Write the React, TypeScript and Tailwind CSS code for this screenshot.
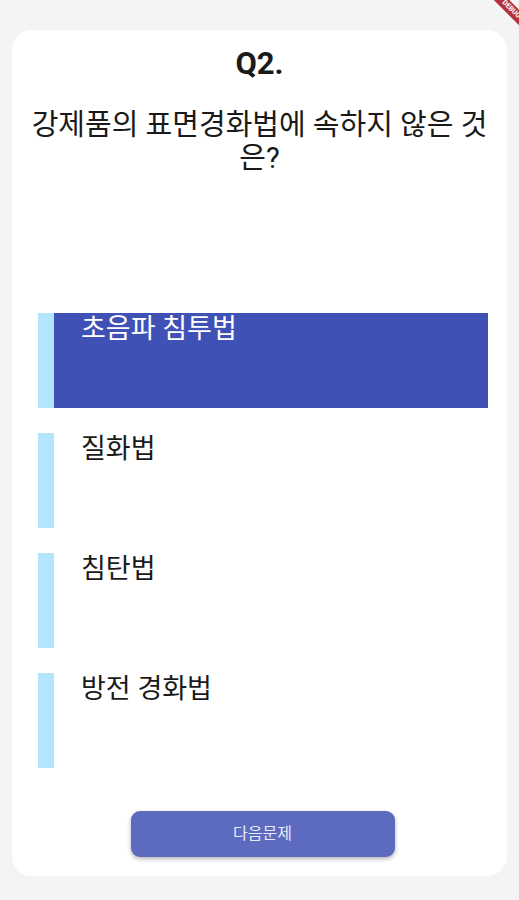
import React from 'react';

const options = ['초음파 침투법', '질화법', '침탄법', '방전 경화법'];

export default function App() {
  const selected = 0;
  return (
    <div
      className="relative h-[900px] w-[519px] overflow-hidden bg-[#f4f4f4] pt-[30px] px-[12px]"
      style={{ fontFamily: 'Roboto, "Noto Sans CJK KR", sans-serif' }}
    >
      {/* debug banner */}
      <div className="absolute right-[-20px] top-[4px] w-[56px] rotate-45 bg-[#b4333d] text-center text-[7px] font-bold leading-[11px] text-white">
        DEBUG
      </div>

      <div className="flex h-[846px] flex-col items-center rounded-[20px] bg-white">
        <div className="mt-[12px] text-[31px] font-bold leading-[44px] text-[#1a1a1a]">Q2.</div>
        <div className="mt-[23px] px-[12px] text-center text-[29px] leading-[33px] text-[#1a1a1a]">
          강제품의 표면경화법에 속하지 않은 것은?
        </div>

        <div className="mt-[138px] flex w-full flex-col gap-[25px] pl-[26px] pr-[19px]">
          {options.map((o, i) => (
            <div key={o} className="flex h-[95px]">
              <div className="w-[16px] bg-[#b3e5fc]" />
              <div
                className={
                  i === selected
                    ? 'flex-1 bg-[#3f51b5] pl-[27px] text-[27px] leading-[32px] text-white'
                    : 'flex-1 pl-[27px] text-[27px] leading-[32px] text-[#1a1a1a]'
                }
              >
                {o}
              </div>
            </div>
          ))}
        </div>

        <button className="ml-[6px] mt-[43px] h-[46px] w-[264px] rounded-[9px] bg-[#5c6bc0] text-[16px] text-[#e8eaf6] shadow-[0_2px_4px_rgba(0,0,0,0.3)]">
          다음문제
        </button>
      </div>
    </div>
  );
}
